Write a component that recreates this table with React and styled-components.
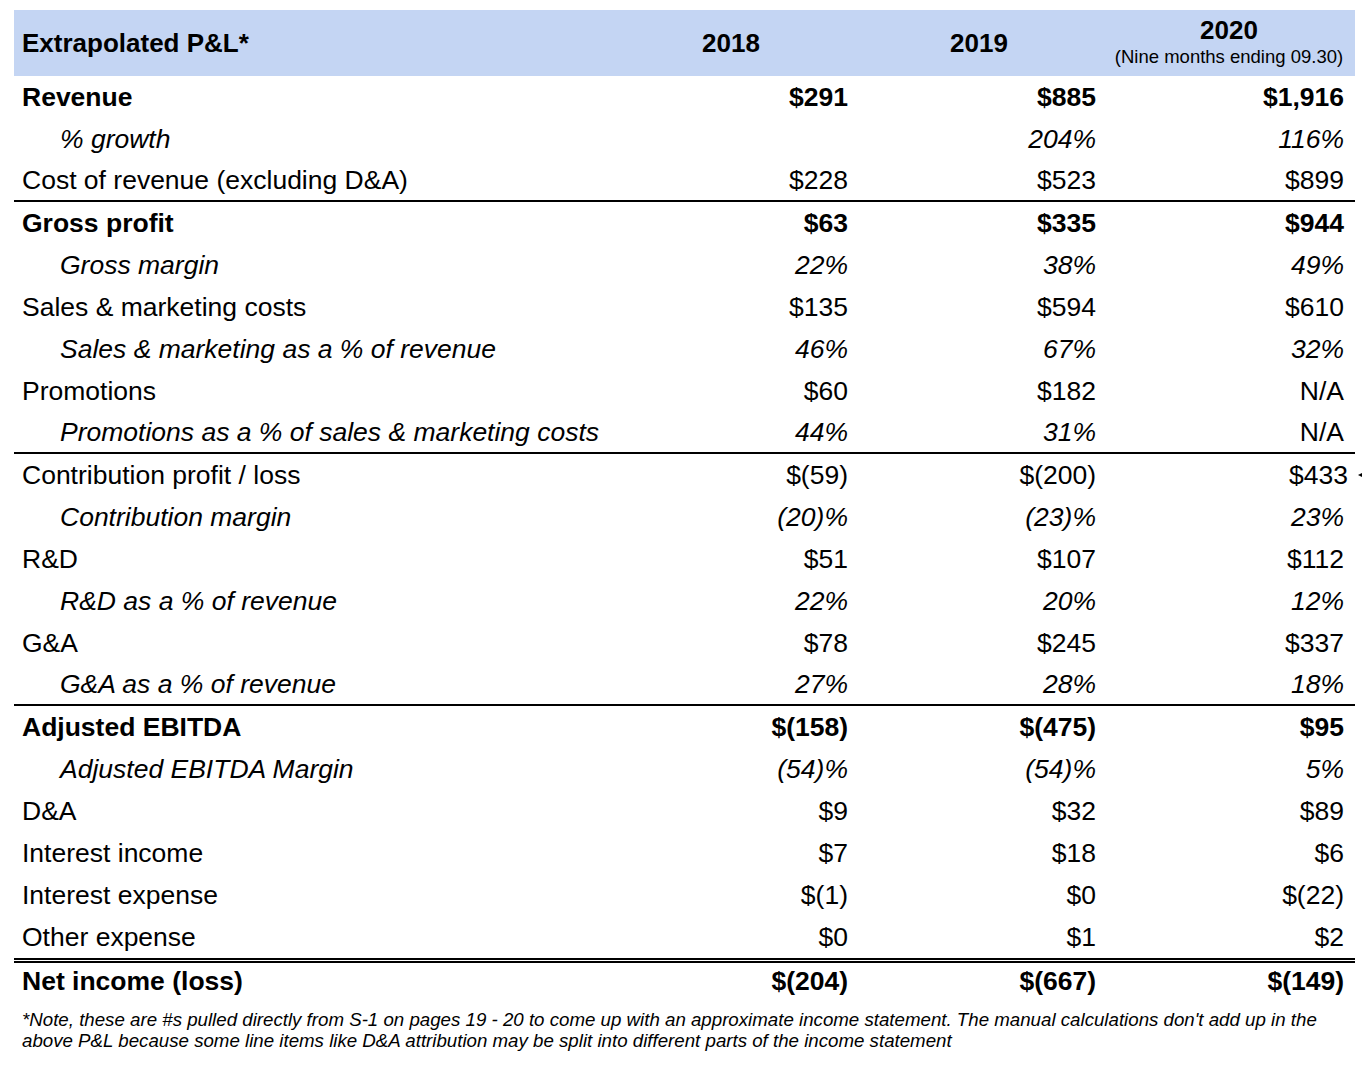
import React from 'react';
import styled, { createGlobalStyle, css } from 'styled-components';

const GlobalStyle = createGlobalStyle`
	html, body {
		margin: 0;
		padding: 0;
		background: #fff;
	}
	body {
		font-family: "Liberation Sans", Arial, sans-serif;
		color: #000;
		overflow: hidden;
	}
`;

const COLS = '593px 248px 248px 252px';

const Sheet = styled.div`
	position: relative;
	padding: 10px 0 0 14px;
	width: 1341px;
`;

const HeaderRow = styled.div`
	display: grid;
	grid-template-columns: ${ COLS };
	height: 66px;
	background: #c4d5f3;
	align-items: center;
`;

const HeadLabel = styled.div`
	padding-left: 8px;
	font-size: 26px;
	font-weight: 700;
`;

const HeadYear = styled.div`
	display: flex;
	flex-direction: column;
	align-items: center;
	font-size: 26px;
	font-weight: 700;
	line-height: 28px;
`;

const HeadNote = styled.span`
	font-size: 18.5px;
	font-weight: 400;
	line-height: 26px;
`;

const Row = styled.div`
	position: relative;
	display: grid;
	grid-template-columns: ${ COLS };
	box-sizing: border-box;
	height: 42px;
	line-height: 42px;
	font-size: 26.5px;
	font-weight: ${ ({ $bold }) => ($bold ? 700 : 400) };
	${ ({ $rule }) => $rule && css`
		border-bottom: 2px solid #000;
		line-height: 40px;
	` }
	${ ({ $total }) => $total && css`
		border-top: 5px double #000;
		height: 40px;
		line-height: 36px;
	` }
`;

const Label = styled.div`
	padding-left: ${ ({ $indent }) => ($indent ? '46px' : '8px') };
	font-style: ${ ({ $italic }) => ($italic ? 'italic' : 'normal') };
	white-space: nowrap;
`;

const Value = styled.div`
	text-align: right;
	padding-right: 7px;
	font-style: ${ ({ $italic }) => ($italic ? 'italic' : 'normal') };
	&:last-child {
		padding-right: 11px;
	}
`;

const Marker = styled.svg`
	position: absolute;
	left: 1344px;
	top: 17px;
`;

const Footnote = styled.p`
	margin: 11px 0 0;
	padding-left: 8px;
	width: 1326px;
	font-size: 18.7px;
	line-height: 21px;
	font-style: italic;
`;

const rows = [
	{ label: 'Revenue', bold: true, values: ['$291', '$885', '$1,916'] },
	{ label: '% growth', sub: true, values: ['', '204%', '116%'] },
	{ label: 'Cost of revenue (excluding D&A)', rule: true, values: ['$228', '$523', '$899'] },
	{ label: 'Gross profit', bold: true, values: ['$63', '$335', '$944'] },
	{ label: 'Gross margin', sub: true, values: ['22%', '38%', '49%'] },
	{ label: 'Sales & marketing costs', values: ['$135', '$594', '$610'] },
	{ label: 'Sales & marketing as a % of revenue', sub: true, values: ['46%', '67%', '32%'] },
	{ label: 'Promotions', values: ['$60', '$182', 'N/A'] },
	{ label: 'Promotions as a % of sales & marketing costs', sub: true, rule: true, values: ['44%', '31%', 'N/A'], upright: [2] },
	{ label: 'Contribution profit / loss', marker: true, values: ['$(59)', '$(200)', '$433'] },
	{ label: 'Contribution margin', sub: true, values: ['(20)%', '(23)%', '23%'] },
	{ label: 'R&D', values: ['$51', '$107', '$112'] },
	{ label: 'R&D as a % of revenue', sub: true, values: ['22%', '20%', '12%'] },
	{ label: 'G&A', values: ['$78', '$245', '$337'] },
	{ label: 'G&A as a % of revenue', sub: true, rule: true, values: ['27%', '28%', '18%'] },
	{ label: 'Adjusted EBITDA', bold: true, values: ['$(158)', '$(475)', '$95'] },
	{ label: 'Adjusted EBITDA Margin', sub: true, values: ['(54)%', '(54)%', '5%'] },
	{ label: 'D&A', values: ['$9', '$32', '$89'] },
	{ label: 'Interest income', values: ['$7', '$18', '$6'] },
	{ label: 'Interest expense', values: ['$(1)', '$0', '$(22)'] },
	{ label: 'Other expense', values: ['$0', '$1', '$2'] },
	{ label: 'Net income (loss)', bold: true, total: true, values: ['$(204)', '$(667)', '$(149)'] },
];

export default function App() {
	return (
		<>
			<GlobalStyle />
			<Sheet>
				<HeaderRow>
					<HeadLabel>Extrapolated P&amp;L*</HeadLabel>
					<HeadYear>2018</HeadYear>
					<HeadYear>2019</HeadYear>
					<HeadYear>
						2020
						<HeadNote>(Nine months ending 09.30)</HeadNote>
					</HeadYear>
				</HeaderRow>
				{ rows.map(row => (
					<Row key={ row.label } $bold={ row.bold } $rule={ row.rule } $total={ row.total }>
						<Label $indent={ row.sub } $italic={ row.sub }>{ row.label }</Label>
						{ row.values.map((v, i) => (
							<Value key={ i } $italic={ row.sub && !(row.upright || []).includes(i) }>{ v }</Value>
						)) }
						{ row.marker && (
							<Marker width="10" height="8" viewBox="0 0 10 8">
								<path d="M0 4 L6 1 L6 7 Z" fill="#000" />
							</Marker>
						) }
					</Row>
				)) }
				<Footnote>
					*Note, these are #s pulled directly from S-1 on pages 19 - 20 to come up with an approximate income statement. The manual calculations don't add up in the above P&amp;L because some line items like D&amp;A attribution may be split into different parts of the income statement
				</Footnote>
			</Sheet>
		</>
	);
}
